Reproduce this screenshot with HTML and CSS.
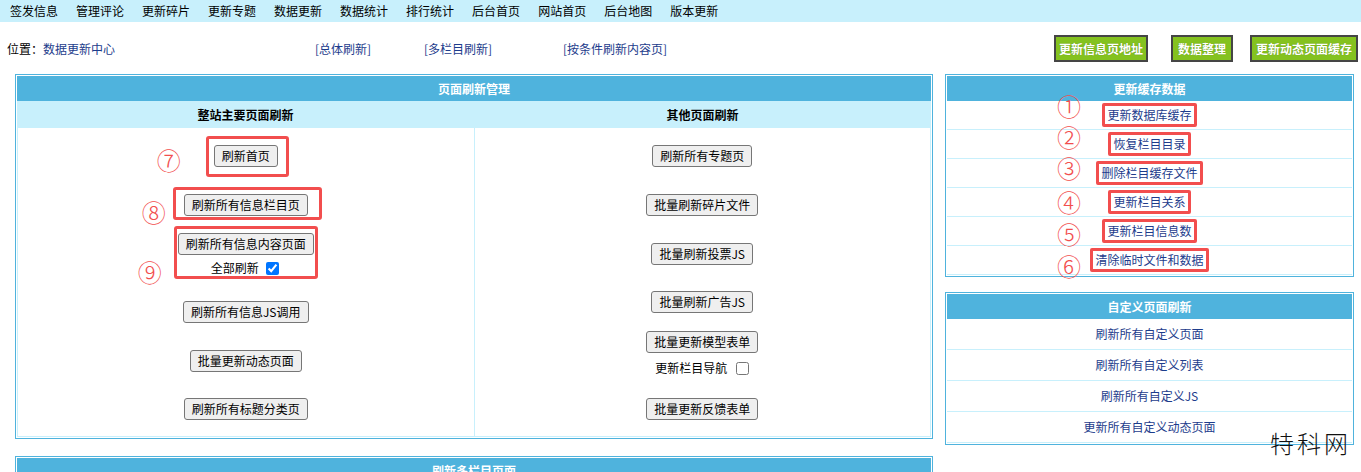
FILE: index.html
```html
<!DOCTYPE html>
<html lang="zh-CN">
<head>
    <meta charset="UTF-8">
    <title>数据更新中心</title>
    <link rel="stylesheet" href="styles.css">
</head>
<body>
    <div class="topnav">
        <a href="#">签发信息</a>
        <a href="#">管理评论</a>
        <a href="#">更新碎片</a>
        <a href="#">更新专题</a>
        <a href="#">数据更新</a>
        <a href="#">数据统计</a>
        <a href="#">排行统计</a>
        <a href="#">后台首页</a>
        <a href="#">网站首页</a>
        <a href="#">后台地图</a>
        <a href="#">版本更新</a>
    </div>

    <div class="locbar">
        <div class="loc">位置：<a href="#">数据更新中心</a></div>
        <a class="jump j1" href="#">[总体刷新]</a>
        <a class="jump j2" href="#">[多栏目刷新]</a>
        <a class="jump" href="#">[按条件刷新内容页]</a>
        <div class="tools">
            <span class="gbtn">更新信息页地址</span>
            <span class="gbtn g2">数据整理</span>
            <span class="gbtn g3">更新动态页面缓存</span>
        </div>
    </div>

    <div class="main">
        <div class="leftcol">
            <div class="panel">
                <div class="panel-head">页面刷新管理</div>
                <div class="split-head">
                    <div>整站主要页面刷新</div>
                    <div>其他页面刷新</div>
                </div>
                <div class="split-body">
                    <div class="cell">
                        <div class="ring ring-7">
                            <span class="num n7">⑦</span>
                            <button class="btn">刷新首页</button>
                        </div>
                        <div class="ring ring-8 sp27">
                            <span class="num n8">⑧</span>
                            <button class="btn">刷新所有信息栏目页</button>
                        </div>
                        <div class="ring ring-9 group sp17">
                            <span class="num n9">⑨</span>
                            <button class="btn">刷新所有信息内容页面</button>
                            <label class="chk">全部刷新 <input type="checkbox" checked></label>
                        </div>
                        <button class="btn sp26">刷新所有信息JS调用</button>
                        <button class="btn sp27">批量更新动态页面</button>
                        <button class="btn sp26">刷新所有标题分类页</button>
                    </div>
                    <div class="cell">
                        <button class="btn">刷新所有专题页</button>
                        <button class="btn sp27">批量刷新碎片文件</button>
                        <button class="btn sp27">批量刷新投票JS</button>
                        <button class="btn sp26">批量刷新广告JS</button>
                        <div class="group sp18">
                            <button class="btn">批量更新模型表单</button>
                            <label class="chk chk-wide">更新栏目导航 <input type="checkbox"></label>
                        </div>
                        <button class="btn sp23">批量更新反馈表单</button>
                    </div>
                </div>
            </div>

            <div class="panel next">
                <div class="panel-head">刷新多栏目页面</div>
            </div>
        </div>

        <div class="rightcol">
            <div class="panel">
                <div class="panel-head">更新缓存数据</div>
                <div class="list-row"><span class="num o1">①</span><a class="mark" href="#">更新数据库缓存</a></div>
                <div class="list-row"><span class="num o2">②</span><a class="mark" href="#">恢复栏目目录</a></div>
                <div class="list-row"><span class="num o3">③</span><a class="mark" href="#">删除栏目缓存文件</a></div>
                <div class="list-row"><span class="num o4">④</span><a class="mark" href="#">更新栏目关系</a></div>
                <div class="list-row"><span class="num o5">⑤</span><a class="mark" href="#">更新栏目信息数</a></div>
                <div class="list-row"><span class="num o6">⑥</span><a class="mark" href="#">清除临时文件和数据</a></div>
            </div>

            <div class="panel next-r">
                <div class="panel-head">自定义页面刷新</div>
                <div class="list-row tall"><a href="#">刷新所有自定义页面</a></div>
                <div class="list-row tall"><a href="#">刷新所有自定义列表</a></div>
                <div class="list-row tall"><a href="#">刷新所有自定义JS</a></div>
                <div class="list-row tall"><a href="#">更新所有自定义动态页面</a></div>
            </div>
        </div>
    </div>

    <div class="watermark">特科网</div>
</body>
</html>
```

FILE: styles.css
```css
html { overflow: hidden; }
body { margin: 0; font: 12px/16px "Noto Sans CJK SC", sans-serif; color: #000; background: #fff; position: relative; }
a { color: #1d3c8c; text-decoration: none; }

.topnav { display: flex; background: #c8f0fc; height: 22px; line-height: 22px; padding-left: 1px; }
.topnav a { color: #000; padding: 0 9px; }

.locbar { display: flex; align-items: center; padding: 13px 3px 12px 7px; }
.loc { width: 308px; }
.jump.j1 { width: 109px; }
.jump.j2 { width: 139px; }
.tools { display: flex; margin-left: auto; }
.gbtn { display: block; height: 27px; line-height: 23px; box-sizing: border-box; padding: 0 3px; border: 2px solid #454545; background: #84c21f; color: #fff; font-weight: bold; text-shadow: 0 0 1px rgba(0,0,0,0.3); }
.gbtn.g2 { margin-left: 23px; padding: 0 5px; }
.gbtn.g3 { margin-left: 17px; padding: 0 4px; }

.main { display: flex; align-items: flex-start; padding: 0 7px 0 15px; gap: 12px; }
.leftcol { flex: 0 0 918px; }
.rightcol { flex: 0 0 409px; }

.panel { border: 1px solid #4fb3dd; padding: 1px; background: #fff; }
.panel.next { margin-top: 17px; }
.panel.next-r { margin-top: 15px; }
.panel-head { height: 25px; line-height: 25px; background: #4fb3dd; color: #fff; font-weight: bold; text-align: center; }

.split-head { display: grid; grid-template-columns: 1fr 1fr; height: 27px; line-height: 27px; background: #c8f0fc; font-weight: bold; text-align: center; }
.split-body { display: grid; grid-template-columns: 1fr 1fr; gap: 1px; padding: 0 1px 1px; background: #c8f0fc; }
.cell { display: flex; flex-direction: column; align-items: center; height: 308px; box-sizing: border-box; padding-top: 17px; background: #fff; }

.btn { height: 22px; padding: 0 7px; font: 12px/20px "Noto Sans CJK SC", sans-serif; color: #000; background: #efefef; border: 1px solid #767676; border-radius: 3px; }
.group { display: flex; flex-direction: column; align-items: center; }
.chk { display: flex; align-items: center; height: 14px; margin-top: 6px; margin-left: -2px; }
.chk input { width: 13px; height: 13px; margin: 0 0 0 7px; }
.chk-wide { margin-top: 8px; margin-left: 0; }
.chk-wide input { margin-left: 9px; }

.sp17 { margin-top: 17px; }
.sp18 { margin-top: 18px; }
.sp23 { margin-top: 23px; }
.sp26 { margin-top: 26px; }
.sp27 { margin-top: 27px; }

/* red annotation marks */
.ring { position: relative; }
.ring::after { content: ""; position: absolute; border: 3px solid #f24e4e; border-radius: 3px; pointer-events: none; }
.ring-7::after { inset: -9px -11px -10px -8px; }
.ring-8::after { inset: -7px -14px -4px -11px; }
.ring-9::after { inset: -7px -4px -4px -4px; }

.num { position: absolute; color: #f24e4e; font-size: 24px; line-height: 24px; font-weight: 300; }
.n7 { left: -57px; top: 3px; }
.n8 { left: -42px; top: 6px; }
.n9 { left: -40px; top: 27px; }

.list-row { position: relative; display: flex; align-items: center; justify-content: center; height: 28px; border-bottom: 1px solid #c8f0fc; }
.list-row.tall { height: 30px; }
.mark { border: 3px solid #f24e4e; border-radius: 2px; padding: 1px 2px; line-height: 16px; }
.list-row .num { left: 110px; }
.o1 { top: -7px; }
.o2 { top: -5px; }
.o3 { top: -3px; }
.o4 { top: 2px; }
.o5 { top: 5px; }
.o6 { top: 8px; }

.watermark { position: absolute; left: 1270px; top: 428px; font-size: 24px; line-height: 30px; letter-spacing: 3px; color: #111; font-weight: 300; }
```
